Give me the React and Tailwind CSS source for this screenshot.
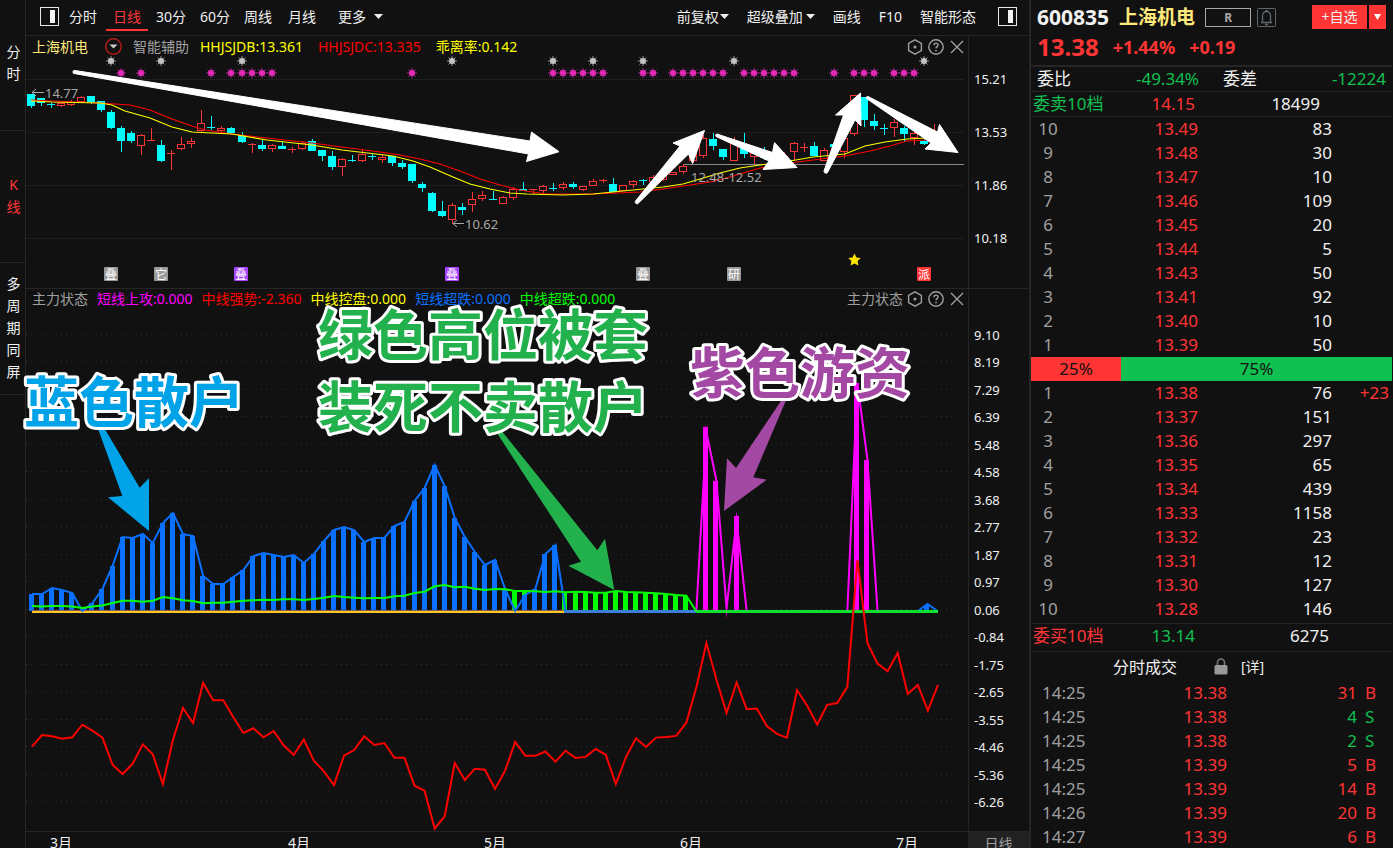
import React from 'react';

const PITCH = 10.04;
const candleX = (i) => Math.floor(31.2 + i * PITCH);
const lineX = (i) => 32 + i * 10.066;

// [direction, high, body top, body bottom, low]
const CANDLES = [
  ['d', 94, 94, 106, 108], ['d', 98, 98, 103, 106], ['d', 103, 104, 105, 108], ['u', 103, 103, 106, 107],
  ['u', 100, 102, 105, 106], ['u', 96, 97, 102, 102], ['d', 96, 96, 102, 104], ['d', 101, 101, 110, 112],
  ['d', 110, 112, 128, 129], ['d', 126, 128, 141, 152], ['d', 131, 133, 141, 143], ['u', 134, 135, 146, 155],
  ['u', 128, 140, 141, 141], ['d', 140, 145, 161, 162], ['u', 150, 153, 154, 170], ['u', 137, 144, 149, 150],
  ['u', 138, 141, 144, 148], ['u', 110, 123, 131, 132], ['d', 116, 127, 128, 130], ['u', 126, 128, 131, 133],
  ['d', 127, 128, 133, 133], ['d', 132, 135, 142, 143], ['u', 143, 144, 145, 153], ['d', 140, 145, 149, 151],
  ['u', 144, 145, 149, 152], ['d', 141, 146, 149, 149], ['u', 147, 149, 150, 153], ['u', 141, 143, 149, 150],
  ['d', 139, 141, 151, 151], ['d', 150, 150, 156, 161], ['d', 151, 156, 167, 170], ['u', 158, 159, 167, 176],
  ['d', 155, 160, 161, 162], ['u', 150, 154, 161, 162], ['d', 154, 156, 157, 160], ['u', 155, 157, 160, 163],
  ['d', 156, 156, 163, 166], ['d', 160, 163, 167, 169], ['d', 164, 164, 181, 183], ['d', 182, 184, 188, 192],
  ['d', 192, 193, 211, 212], ['d', 201, 211, 216, 217], ['u', 203, 205, 220, 224], ['d', 203, 207, 210, 215],
  ['u', 192, 199, 205, 212], ['u', 191, 195, 199, 201], ['d', 191, 199, 200, 200], ['u', 196, 197, 204, 204],
  ['u', 187, 189, 198, 200], ['d', 182, 189, 191, 191], ['u', 189, 189, 190, 194], ['u', 185, 186, 191, 193],
  ['d', 183, 188, 189, 191], ['u', 182, 184, 188, 190], ['d', 182, 184, 187, 189], ['u', 186, 186, 190, 191],
  ['u', 179, 181, 186, 186], ['u', 179, 180, 181, 183], ['d', 178, 184, 192, 192], ['u', 185, 185, 191, 191],
  ['u', 180, 181, 185, 188], ['d', 179, 180, 181, 185], ['u', 175, 177, 182, 182], ['u', 174, 176, 180, 181],
  ['u', 172, 172, 175, 175], ['u', 164, 166, 172, 174], ['u', 150, 150, 161, 163], ['u', 135, 138, 156, 158],
  ['d', 133, 139, 146, 150], ['d', 149, 149, 157, 160], ['u', 137, 143, 161, 161], ['d', 133, 145, 154, 158],
  ['u', 152, 153, 157, 164], ['d', 147, 152, 158, 160], ['u', 150, 154, 160, 162], ['u', 152, 156, 161, 162],
  ['u', 142, 143, 152, 160], ['u', 143, 147, 148, 152], ['d', 142, 146, 156, 156], ['u', 148, 150, 161, 161],
  ['d', 144, 144, 147, 150], ['u', 136, 138, 152, 158], ['u', 95, 95, 134, 136], ['d', 97, 97, 120, 127],
  ['d', 114, 121, 126, 130], ['d', 124, 128, 129, 135], ['u', 119, 122, 128, 137], ['d', 126, 128, 134, 142],
  ['u', 131, 133, 138, 145], ['d', 139, 141, 144, 145], ['u', 124, 132, 140, 142],
];

const FAST_MA = '31,101 52,102 100,103 112,105 125,111 150,118 172,127 192,132 232,134 267,140 312,145 342,150 393,156 413,161 430,167 453,177 470,184 490,189 510,193 527,194 563,195 593,194 633,190 663,187 683,184 700,179 720,173 740,168 760,165 790,161 813,157 845,154 865,146 885,142 907,139 926,138';
const SLOW_MA = '31,100 52,101 100,103 130,105 150,110 172,119 192,126 205,130 232,134 267,138 312,143 342,147 380,152 400,155 420,159 440,164 460,171 480,179 500,185 520,190 545,194 593,194 640,192 663,189 690,185 710,182 730,177 760,168 790,163 813,160 845,156 870,151 890,146 907,141 926,140';

const GREY_MARKS = [8, 13, 21, 42, 52, 56, 61, 70, 89];
const PINK_MARKS = [9, 11, 18, 20, 21, 22, 23, 24, 38, 52, 53, 54, 55, 56, 57, 61, 62, 64, 65, 66, 67, 68, 69, 71, 72, 73, 74, 75, 76, 80, 82, 83, 84, 86, 87, 88];

const EVENTS = [
  { x: 111, label: '叠', color: '#9a9a9a' },
  { x: 161, label: '它', color: '#9a9a9a' },
  { x: 241, label: '叠', color: '#a845ff' },
  { x: 452, label: '叠', color: '#a845ff' },
  { x: 643, label: '叠', color: '#9a9a9a' },
  { x: 734, label: '研', color: '#9a9a9a' },
  { x: 924, label: '派', color: '#ff3535' },
];

const BLUE = [
  594, 594, 588, 590, 593, 611, 603, 589, 566, 537, 538, 534, 543, 523, 513, 534, 536, 576, 584, 584, 577, 570, 556,
  553, 555, 557, 555, 563, 554, 541, 530, 527, 530, 542, 538, 538, 526, 522, 501, 488, 465, 486, 518, 537, 552, 565,
  560, 589, 611, 595, 589, 554, 545, 611,
];

const GREEN = [
  606, 606.5, 606, 606, 606.5, 608, 606.5, 605.5, 603, 600.7, 600.7, 601.7, 600.7, 597, 598.3, 600.3, 601, 603.3,
  602.7, 602.7, 601.7, 600.7, 600.3, 599.7, 600, 599.3, 599.3, 600, 599, 597.7, 596, 597, 597.7, 598.3, 598, 598,
  596.3, 595.7, 593, 591.7, 586.3, 585, 587.3, 586.7, 588.7, 590, 589, 589.3, 591, 591, 591.3, 592, 591.3, 592.3,
  591.7, 592, 592.7, 592.7, 591, 592, 592.3, 592.7, 593.3, 594, 595, 595.7, 611.5,
];
const GREEN_BARS = [48, 49, 53, 54, 55, 56, 57, 58, 59, 60, 61, 62, 63, 64, 65];

const PINK_BARS = [[67, 427], [68, 481], [70, 516], [82, 383], [83, 460]];

const RED = [
  746.7, 735, 736.3, 738.7, 737.3, 724.7, 730.7, 737.7, 764.7, 774, 763.7, 744.3, 754.3, 784, 740, 708, 723, 683,
  700.3, 700.3, 717.3, 733, 728.3, 737.3, 731, 745.3, 755, 739.5, 760.7, 771.3, 785, 755.7, 750, 736.3, 745, 743,
  757.7, 757.7, 785.7, 790.7, 828.5, 816.3, 763, 780, 768.7, 769.7, 789, 770.7, 742, 755.8, 755.8, 751.5, 761.6,
  750.8, 757.9, 756.9, 749, 754.8, 784, 757.2, 738.3, 747, 737.6, 736.9, 735.9, 722.7, 687.2, 643, 679.8, 713,
  682.5, 709.2, 708.5, 726, 733.9, 737.6, 690, 705.5, 724.5, 704.8, 703.1, 686.9, 560, 643.3, 663.6, 671.3, 653,
  694, 685, 710.5, 684.9,
];

const PRICE_TICKS = ['15.21', '13.53', '11.86', '10.18'];
const STATE_TICKS = ['9.10', '8.19', '7.29', '6.39', '5.48', '4.58', '3.68', '2.77', '1.87', '0.97', '0.06', '-0.84', '-1.75', '-2.65', '-3.55', '-4.46', '-5.36', '-6.26'];

const ASKS = [[10, '13.49', 83], [9, '13.48', 30], [8, '13.47', 10], [7, '13.46', 109], [6, '13.45', 20], [5, '13.44', 5], [4, '13.43', 50], [3, '13.41', 92], [2, '13.40', 10], [1, '13.39', 50]];
const BIDS = [[1, '13.38', 76, '+23'], [2, '13.37', 151], [3, '13.36', 297], [4, '13.35', 65], [5, '13.34', 439], [6, '13.33', 1158], [7, '13.32', 23], [8, '13.31', 12], [9, '13.30', 127], [10, '13.28', 146]];
const TRADES = [['14:25', '13.38', 31, 'B'], ['14:25', '13.38', 4, 'S'], ['14:25', '13.38', 2, 'S'], ['14:25', '13.39', 5, 'B'], ['14:25', '13.39', 14, 'B'], ['14:26', '13.39', 20, 'B'], ['14:27', '13.39', 6, 'B']];

const toPoints = (values) => values.map((y, i) => `${lineX(i)},${y}`).join(' ');

const Caret = () => (
  <svg width="9" height="5" viewBox="0 0 9 5" aria-hidden="true">
    <path d="M0 0h9L4.5 5z" fill="#f0f0f0" />
  </svg>
);

const PanelIcon = () => (
  <svg width="19" height="19" viewBox="0 0 19 19" aria-hidden="true">
    <rect x="0.5" y="0.5" width="18" height="18" fill="none" stroke="#e8e8e8" />
    <rect x="10" y="3" width="5" height="13" fill="#f4f4f4" />
  </svg>
);

const PaneTools = ({ name }) => (
  <div className="flex items-center gap-[5px]">
    <button type="button" aria-label={`${name}设置`}>
      <svg width="16" height="16" viewBox="0 0 16 16" fill="none" stroke="#a0a0a0" strokeWidth="1.4">
        <path d="M8 0.9l6.4 3.6v7L8 15.1l-6.4-3.6v-7z" />
        <circle cx="8" cy="8" r="1.5" fill="#a0a0a0" stroke="none" />
      </svg>
    </button>
    <button type="button" aria-label={`${name}帮助`}>
      <svg width="16" height="16" viewBox="0 0 16 16" fill="none" stroke="#a0a0a0" strokeWidth="1.4">
        <circle cx="8" cy="8" r="7.2" />
        <path d="M5.9 6.3c0-1.4 1-2.2 2.1-2.2s2.1.8 2.1 2c0 1.4-2.1 1.6-2.1 3.200" />
        <circle cx="8" cy="11.600" r="0.900" fill="#a0a0a0" stroke="none" />
      </svg>
    </button>
    <button type="button" aria-label={`${name}关闭`}>
      <svg width="16" height="16" viewBox="0 0 16 16" stroke="#a0a0a0" strokeWidth="1.4">
        <path d="M2 2l12 12M14 2L2 14" />
      </svg>
    </button>
  </div>
);

const Burst = ({ x, y, color }) => (
  <g transform={`translate(${x} ${y})`}>
    <path d="M0-5V5M-5 0H5M-3.5-3.5l7 7M3.5-3.5l-7 7" stroke={color} strokeWidth="1" opacity="0.75" />
    <circle r="3" fill={color} />
  </g>
);

const Candle = ({ i, data }) => {
  const [dir, high, top, bottom, low] = data;
  const x = candleX(i);
  const height = bottom - top;

  if (dir === 'd') {
    return (
      <g fill="#00ffff">
        <rect x={x} y={high} width="1" height={low - high} />
        <rect x={x - 4} y={top} width="8" height={height} />
      </g>
    );
  }
  if (height <= 1) {
    return (
      <g fill="#ff3535">
        <rect x={x} y={high} width="1" height={low - high} />
        <rect x={x - 4} y={top} width="8" height="1" />
      </g>
    );
  }
  return (
    <g>
      <rect x={x} y={high} width="1" height={top - high} fill="#ff3535" />
      <rect x={x} y={bottom} width="1" height={low - bottom} fill="#ff3535" />
      <rect x={x - 3.5} y={top + 0.5} width="7" height={height - 1} fill="none" stroke="#ff3535" />
    </g>
  );
};

const PriceChart = () => (
  <svg viewBox="26 57 942 231" className="block w-full overflow-visible" role="img" aria-label="日线">
    {[79.5, 132.5, 185.5, 238.5].map((y) => (
      <path key={y} d={`M26 ${y}H964`} stroke="#2c2c2c" strokeDasharray="1 1" />
    ))}
    <path d="M683 164.5H964" stroke="#8a8a8a" />
    <g shapeRendering="crispEdges">
      {CANDLES.map((data, i) => <Candle key={i} i={i} data={data} />)}
    </g>
    <polyline points={SLOW_MA} fill="none" stroke="#ff0000" strokeWidth="1.2" />
    <polyline points={FAST_MA} fill="none" stroke="#ffff00" strokeWidth="1.2" />

    {GREY_MARKS.map((i) => <Burst key={i} x={candleX(i)} y={61} color="#c4c4c4" />)}
    {PINK_MARKS.map((i) => <Burst key={i} x={candleX(i)} y={73} color="#e62bbb" />)}

    <g fill="#a8a8a8" fontSize="13">
      <text x="45" y="98">14.77</text>
      <text x="465" y="229">10.62</text>
      <text x="691" y="182">12.48-12.52</text>
    </g>
    <path d="M44 92.5H32M36 89l-4 3.5 4 3.5M464 223.5H453M457 220l-4 3.5 4 3.5" fill="none" stroke="#a8a8a8" />

    {EVENTS.map((event) => (
      <g key={event.x}>
        <rect x={event.x - 7} y="267" width="14" height="14" rx="1" fill={event.color} />
        <text x={event.x} y="279" fontSize="12" fill="#fff" textAnchor="middle">{event.label}</text>
      </g>
    ))}
    <path d="M854.5 253.5l1.9 4 4.3.6-3.1 3 .8 4.3-3.9-2-3.9 2 .8-4.3-3.1-3 4.3-.6z" fill="#ffe600" />

    {/* Trend arrows */}
    <g fill="#fff" stroke="#fff" strokeLinejoin="round" strokeWidth="1">
      <path d="M75 70.5L530 141l1.5-9L559 151.7 526.5 161.5l2-7.5L74 73.5a1.5 1.5 0 0 1 1-3z" />
      <path d="M635.5 201L680 146l-7-3 31.500-12.500-12 33-4-9.500-50 49a1.800 1.800 0 0 1-3-2z" />
      <path d="M717 134l55.5 18.5 2-10L797 167.5l-34 2 6-8.5-53-24.5a1.5 1.5 0 0 1 1-2.500z" />
      <path d="M824 171l19.5-56h-8l25-22 .5 33-6-6-27.500 52.500a2 2 0 0 1-3.500-1.500z" />
      <path d="M868 96.500L937.500 132l2-7.500L958 152.500 925 149l6-6L866.500 98.500a1.300 1.300 0 0 1 1.500-2z" />
    </g>
  </svg>
);

const StateChart = () => (
  <svg viewBox="26 309 942 522" className="relative block w-full overflow-visible" role="img" aria-label="主力状态">
    {STATE_TICKS.map((tick, i) => {
      const y = Math.round(334 + i * 27.47) + 0.5;
      return <path key={tick} d={`M26 ${y}H964`} stroke="#2c2c2c" strokeDasharray="1 4" />;
    })}

    <g shapeRendering="crispEdges">
      {GREEN_BARS.map((i) => <rect key={i} x={Math.round(lineX(i) - 3)} y={GREEN[i]} width="5" height={611 - GREEN[i]} fill="#00ff00" />)}
      {BLUE.slice(0, 53).map((y, i) => <rect key={i} x={Math.round(lineX(i) - 3)} y={y} width="5" height={611 - y} fill="#0a70ff" />)}
      <rect x="924" y="605" width="5" height="6" fill="#0a70ff" />
      {PINK_BARS.map(([i, y]) => <rect key={i} x={Math.round(lineX(i) - 3)} y={y} width="5" height={611 - y} fill="#ff00ff" />)}
    </g>

    {/* Zero line takes the colour of the state in force */}
    <g shapeRendering="crispEdges">
      <rect x="32" y="610" width="532" height="1" fill="#8a5a4a" />
      <rect x="32" y="611" width="532" height="2" fill="#ffc828" />
      <rect x="564" y="610" width="132" height="3" fill="#3a80d8" />
    </g>

    <polyline points={toPoints(BLUE)} fill="none" stroke="#0a70ff" strokeWidth="2" strokeMiterlimit="4" />
    <path d="M918 611l9.500-7 10 7" fill="none" stroke="#0a70ff" strokeWidth="2" />
    <polyline
      points={`${lineX(66)},611 ${lineX(67)},432 ${lineX(68)},481 ${lineX(69)},608 ${lineX(70)},520 ${lineX(71)},611`}
      fill="none"
      stroke="#ff00ff"
      strokeWidth="2"
      strokeMiterlimit="20"
    />
    <polyline
      points={`${lineX(81)},611 ${lineX(82)},383 ${lineX(83)},460 ${lineX(84)},611`}
      fill="none"
      stroke="#ff00ff"
      strokeWidth="2"
    />
    <polyline points={toPoints(GREEN)} fill="none" stroke="#00ff00" strokeWidth="2" />
    <rect x="696" y="610" width="242" height="3" fill="#10e030" />
    <polyline points={toPoints(RED)} fill="none" stroke="#ff0000" strokeWidth="2" strokeMiterlimit="10" />

    {/* Notes */}
    <path d="M97 426h6l36.700 61.700 9.300-9.700v53l-41-33.700 14.300-1.300z" fill="#00a2e8" />
    <path d="M495 430h6l96.300 120.300 7.700-11.600 9.300 51.300-46-24.300 12.700-4z" fill="#22b14c" />
    <path d="M783 398h4l-33.700 79.300 13.400 2.400L724 511l3-52.700 9 9.700z" fill="#a349a4" />
    <g fontSize="55" fontWeight="700" stroke="#fff" strokeWidth="6" strokeLinejoin="round" className="[paint-order:stroke]">
      <text x="24" y="422" fill="#00a2e8">蓝色散户</text>
      <text x="318" y="355" fill="#22b14c">绿色高位被套</text>
      <text x="318" y="427" fill="#22b14c">装死不卖散户</text>
      <text x="690" y="393" fill="#a349a4">紫色游资</text>
    </g>
  </svg>
);

const SideRail = () => (
  <nav className="w-[26px] shrink-0 border-r border-[#262626] text-center leading-[22px]">
    <button type="button" className="flex h-[131px] w-full justify-center border-b border-[#262626] pt-[41px] pl-[2px]">
      <span>分<br />时</span>
    </button>
    <button type="button" className="flex h-[132px] w-full items-center justify-center border-b border-[#262626] pb-[2px] pl-[2px] text-[#ff3535]">
      <span>K<br />线</span>
    </button>
    <button type="button" className="flex h-[132px] w-full items-center justify-center border-b border-[#262626] pb-[2px] pl-[2px]">
      <span>多<br />周<br />期<br />同<br />屏</span>
    </button>
  </nav>
);

const TopBar = () => (
  <header className="flex h-[36px] items-center justify-between border-b border-[#262626] pr-3 pb-[2px] pl-[14px]">
    <div className="flex h-full items-center gap-[14px]">
      <div className="flex h-full items-center gap-[10px]">
        <button type="button" aria-label="左侧栏"><PanelIcon /></button>
        <button type="button">分时</button>
        <button type="button" className="mt-[6px] -ml-px h-[23px] border-b-2 border-[#ff3535] px-[7px] pb-[4px] leading-[17px] text-[#ff3535]">日线</button>
      </div>
      <div className="-ml-[6px] flex items-center gap-[14px]">
        <button type="button">30分</button>
        <button type="button">60分</button>
        <button type="button">周线</button>
        <button type="button" className="ml-[2px]">月线</button>
      </div>
      <button type="button" className="ml-2 flex items-center gap-2">更多 <Caret /></button>
    </div>
    <div className="flex items-center gap-[18px]">
      <button type="button" className="flex items-center gap-px">前复权 <Caret /></button>
      <button type="button" className="flex items-center gap-[3px]">超级叠加 <Caret /></button>
      <button type="button">画线</button>
      <button type="button">F10</button>
      <button type="button">智能形态</button>
      <button type="button" className="ml-1" aria-label="右侧栏"><PanelIcon /></button>
    </div>
  </header>
);

const BookRows = ({ rows }) => (
  <table className="w-full table-fixed">
    <colgroup>
      <col className="w-[34px]" />
      <col />
      <col className="w-[134px]" />
      <col className="w-[60px]" />
    </colgroup>
    <tbody>
      {rows.map(([level, price, volume, change]) => (
        <tr key={level} className="h-6">
          <td className="text-center text-[#a0a0a0]">{level}</td>
          <td className="text-right text-[#ff3535]">{price}</td>
          <td className="text-right">{volume}</td>
          <td className="pr-[3px] text-right text-[#ff3535]">{change}</td>
        </tr>
      ))}
    </tbody>
  </table>
);

const QuotePanel = () => (
  <aside className="w-[364px] shrink-0 border-l-2 border-[#262626] pr-px text-[17px] leading-6">
    <div className="h-[67px] border-b-2 border-[#262626] px-[6px]">
      <div className="flex h-[34px] items-center">
        <span className="text-[21px] font-bold">600835</span>
        <h1 className="ml-[10px] text-[19px] font-bold text-[#ffe97a]">上海机电</h1>
        <button type="button" className="ml-[10px] h-[19px] w-[46px] border border-[#a8a8a8] text-[12px] leading-[17px] font-bold text-[#a8a8a8]">R</button>
        <button type="button" aria-label="提醒" className="ml-[6px]">
          <svg width="19" height="19" viewBox="0 0 19 19" fill="none" stroke="#60666e">
            <rect x="0.5" y="0.5" width="18" height="18" rx="1" />
            <path d="M4 14.5h11M5.5 14V8c0-2.500 1.700-4.300 4-4.300s4 1.800 4 4.300v6M8.500 3.500a1 1 0 0 1 2 0M8 16.500h3" strokeWidth="1.3" />
          </svg>
        </button>
        <button type="button" className="ml-auto h-6 w-[55px] bg-[#ff3535] text-sm leading-6">+自选</button>
        <button type="button" aria-label="更多自选" className="ml-[2px] flex h-6 w-[17px] items-center justify-center bg-[#ff3535]">
          <svg width="7" height="6" viewBox="0 0 7 6"><path d="M0 0h7L3.5 6z" fill="#fff" /></svg>
        </button>
      </div>
      <div className="flex h-[26px] items-center gap-[14px] text-[18px] font-bold text-[#ff3535]">
        <span className="text-[24px]">13.38</span>
        <span>+1.44%</span>
        <span>+0.19</span>
      </div>
    </div>

    <div className="flex h-[25px] border-b border-[#262626] px-[6px]">
      <span className="w-[86px]">委比</span>
      <span className="w-[76px] text-right text-[#10c050]">-49.34%</span>
      <span className="ml-6">委差</span>
      <span className="ml-auto text-[#10c050]">-12224</span>
    </div>
    <div className="flex h-[25px] border-b border-[#262626] pl-[2px]">
      <span className="w-[86px] text-[#10c050]">委卖10档</span>
      <span className="w-[76px] text-right text-[#ff3535]">14.15</span>
      <span className="ml-auto pr-[72px]">18499</span>
    </div>
    <BookRows rows={ASKS} />
    <div className="flex h-6 text-center text-[#111]">
      <span className="w-1/4 bg-[#ff3535]">25%</span>
      <span className="w-3/4 bg-[#10c050]">75%</span>
    </div>
    <BookRows rows={BIDS} />
    <div className="mt-[2px] flex h-[29px] border-y border-[#262626] pl-[2px]">
      <span className="w-[86px] text-[#ff3535]">委买10档</span>
      <span className="w-[76px] text-right text-[#10c050]">13.14</span>
      <span className="ml-auto pr-[63px]">6275</span>
    </div>

    <div className="flex h-[29px] items-center pl-[82px] text-[16px]">
      <h2>分时成交</h2>
      <svg width="14" height="17" viewBox="0 0 14 17" className="ml-[37px]" aria-hidden="true">
        <path d="M3.5 8V4.5a3.5 3.5 0 0 1 7 0V8" fill="none" stroke="#777" strokeWidth="1.6" />
        <rect x="0.5" y="7" width="13" height="9.5" rx="1.5" fill="#999" />
      </svg>
      <a href="#detail" className="ml-[13px] text-sm">[详]</a>
    </div>
    <table className="w-full table-fixed">
      <colgroup>
        <col className="w-[76px]" />
        <col />
        <col className="w-[130px]" />
        <col className="w-[35px]" />
      </colgroup>
      <tbody>
        {TRADES.map(([time, price, volume, side], i) => {
          const color = side === 'B' ? 'text-[#ff3535]' : 'text-[#10c050]';
          return (
            <tr key={i} className="h-6">
              <td className="pl-[11px] text-[#a0a0a0]">{time}</td>
              <td className="text-right text-[#ff3535]">{price}</td>
              <td className={`text-right ${color}`}>{volume}</td>
              <td className={`pl-2 ${color}`}>{side}</td>
            </tr>
          );
        })}
      </tbody>
    </table>
  </aside>
);

const App = () => {
  return (
    <div className="flex h-screen overflow-hidden bg-[#111] font-['Noto_Sans','Noto_Sans_CJK_SC',sans-serif] text-sm text-[#f0f0f0]">
      <SideRail />

      <main className="min-w-0 flex-1">
        <TopBar />

        {/* Price pane */}
        <section className="flex border-b border-[#262626]">
          <div className="min-w-0 flex-1">
            <div className="flex h-[21px] items-center justify-between pr-[3px] pl-[6px] leading-5 whitespace-nowrap">
              <div className="flex items-center gap-[11px]">
                <span className="text-[#ffe97a]">上海机电</span>
                <button type="button" aria-label="切换股票" className="ml-[6px]">
                  <svg width="17" height="17" viewBox="0 0 17 17">
                    <circle cx="8.5" cy="8.5" r="7.7" fill="none" stroke="#b01c14" strokeWidth="1.5" />
                    <path d="M4.5 6.5h8l-4 4z" fill="#ccc" />
                  </svg>
                </button>
                <span className="text-[#a0a0a0]">智能辅助</span>
                <div className="flex gap-[15px]">
                  <span className="text-[#ffff00]">HHJSJDB:13.361</span>
                  <span className="text-[#ff0000]">HHJSJDC:13.335</span>
                  <span className="text-[#ffff00]">乖离率:0.142</span>
                </div>
              </div>
              <PaneTools name="日线" />
            </div>
            <PriceChart />
          </div>
          <div className="flex w-[61px] flex-col justify-between border-l border-[#262626] pt-[33px] pb-[40px] pl-[5px] text-[13px] leading-5">
            {PRICE_TICKS.map((tick) => <span key={tick}>{tick}</span>)}
          </div>
        </section>

        {/* Main force pane */}
        <section className="flex">
          <div className="min-w-0 flex-1">
            <div className="flex h-5 items-center justify-between pr-[3px] pl-[6px] leading-5 whitespace-nowrap">
              <div className="flex gap-[9px]">
                <span className="text-[#a0a0a0]">主力状态</span>
                <span className="text-[#ff00ff]">短线上攻:0.000</span>
                <span className="text-[#ff0000]">中线强势:-2.360</span>
                <span className="text-[#ffff00]">中线控盘:0.000</span>
                <span className="text-[#0a70ff]">短线超跌:0.000</span>
                <span className="text-[#00ff00]">中线超跌:0.000</span>
              </div>
              <div className="flex items-center gap-1">
                <span className="text-[#a0a0a0]">主力状态</span>
                <PaneTools name="主力状态" />
              </div>
            </div>
            <StateChart />
          </div>
          <div className="flex w-[61px] flex-col justify-between border-l border-[#262626] pt-[36px] pb-[19px] pl-[5px] text-[13px] leading-5">
            {STATE_TICKS.map((tick) => <span key={tick}>{tick}</span>)}
          </div>
        </section>

        <footer className="flex h-6 border-t border-[#262626] leading-[22px]">
          <div className="grid flex-1 grid-cols-[238fr_196fr_196fr_216fr_72fr] pl-6">
            <span>3月</span>
            <span>4月</span>
            <span>5月</span>
            <span>6月</span>
            <span>7月</span>
          </div>
          <button type="button" className="w-[61px] bg-[#222] text-[#a0a0a0]">日线</button>
        </footer>
      </main>

      <QuotePanel />
    </div>
  );
};

export default App;
